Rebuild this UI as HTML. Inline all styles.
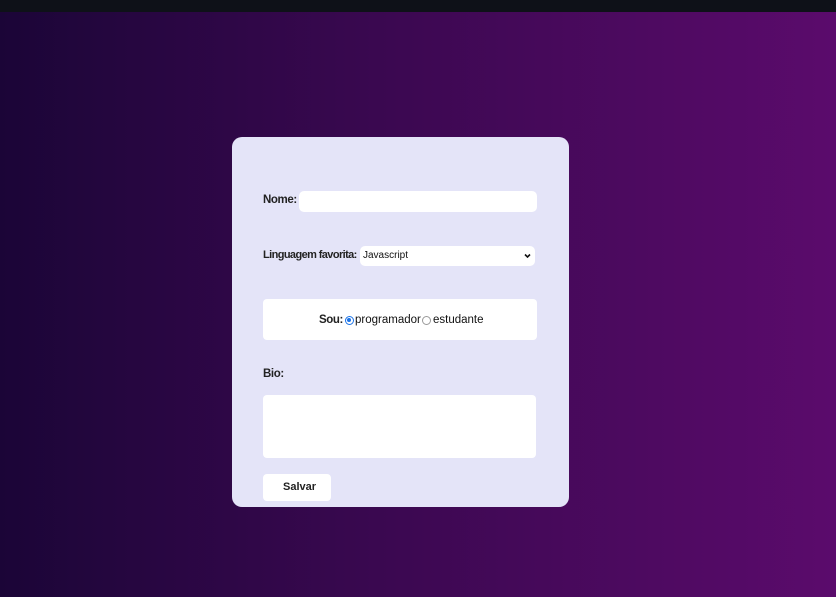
<!DOCTYPE html>
<html><head><meta charset="utf-8"><style>
*{margin:0;padding:0;box-sizing:border-box}
body{width:836px;height:597px;overflow:hidden;position:relative;font-family:"Liberation Sans",Arial,sans-serif;background:linear-gradient(90deg,#1b0537 0%,#3a0850 45%,#5b0b6c 100%)}
.top{position:absolute;left:0;top:0;width:836px;height:12px;background:#0e1118}
.card{position:absolute;left:232px;top:137px;width:337px;height:370px;background:#e4e4f8;border-radius:10px}
.a{position:absolute;color:#222;font-size:11.5px;font-weight:bold;letter-spacing:-0.4px;white-space:nowrap}
.w{position:absolute;background:#fff;border-radius:5px}
</style></head><body>
<div class="top"></div>
<div class="card">
<div class="a" style="left:31px;top:57px">Nome:</div>
<div class="w" style="left:67px;top:54px;width:238px;height:21px"></div>
<div class="a" style="left:31px;top:112px;letter-spacing:-0.6px;font-size:11px">Linguagem favorita:</div>
<div class="w" style="left:128px;top:109px;width:175px;height:20px"></div>
<div class="a" style="left:131px;top:113px;font-size:10px;color:#111;font-weight:normal;letter-spacing:0">Javascript</div>
<svg style="position:absolute;left:292px;top:116px" width="7" height="6" viewBox="0 0 7 6"><path d="M1 1.5L3.5 4L6 1.5" stroke="#111" stroke-width="1.6" fill="none"/></svg>
<div class="w" style="left:31px;top:162px;width:274px;height:41px;border-radius:4px"></div>
<div class="a" style="left:87px;top:177px">Sou:</div>
<div style="position:absolute;left:113px;top:179px;width:9px;height:9px;border-radius:50%;border:1.5px solid #1a73e8;background:#fff"><div style="margin:1px;width:4px;height:4px;border-radius:50%;background:#1a73e8"></div></div>
<div class="a" style="left:123px;top:177px;font-weight:normal;color:#111;letter-spacing:0;font-size:11.5px">programador</div>
<div style="position:absolute;left:190px;top:179px;width:9px;height:9px;border-radius:50%;border:1px solid #999;background:#fff"></div>
<div class="a" style="left:201px;top:177px;font-weight:normal;color:#111;letter-spacing:0;font-size:11.5px">estudante</div>
<div class="a" style="left:31px;top:231px">Bio:</div>
<div class="w" style="left:31px;top:258px;width:273px;height:63px;border-radius:4px"></div>
<div class="w" style="left:31px;top:337px;width:68px;height:27px;border-radius:4px"></div>
<div class="a" style="left:51px;top:344px;font-size:11px;letter-spacing:0">Salvar</div>
</div>
</body></html>
